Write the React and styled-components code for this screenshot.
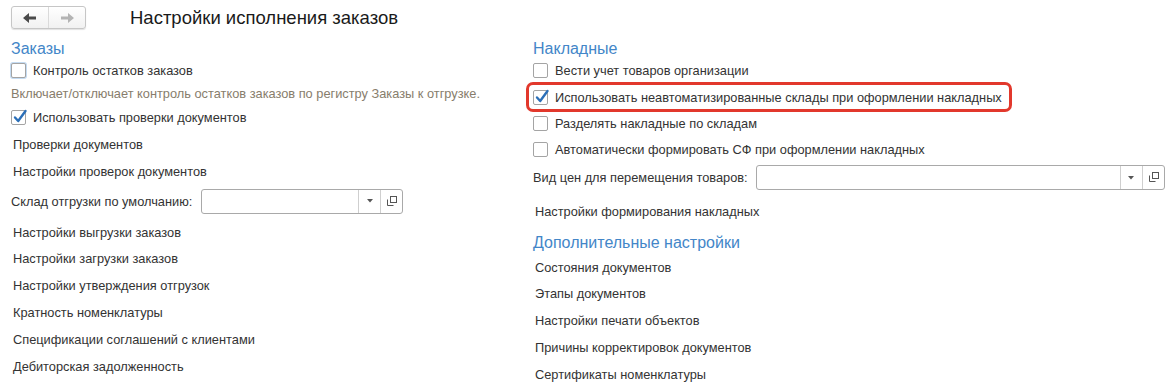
import React from 'react'
import styled, { createGlobalStyle, css } from 'styled-components'

const GlobalStyle = createGlobalStyle`
  body {
    margin: 0;
    background: #fff;
    font-family: 'Liberation Sans', Arial, sans-serif;
    font-size: 12.8px;
    color: #333;
  }
`

const Page = styled.div`
  display: grid;
  grid-template-columns: 522px 1fr;
  padding: 0 5px 0 11px;
  width: 1170px;
  box-sizing: border-box;
`

const TopBar = styled.div`
  grid-column: 1 / -1;
  display: flex;
  align-items: center;
  height: 23px;
  margin: 6px 0 10px;
`

const NavGroup = styled.div`
  display: flex;
  height: 23px;
  box-sizing: border-box;
  border: 1px solid #c6c6c6;
  border-radius: 3px;
  background: linear-gradient(#ffffff, #f1f1f1);
  box-shadow: 0 1px 1px rgba(0, 0, 0, 0.12);
`

const NavButton = styled.div`
  width: 36px;
  display: flex;
  align-items: center;
  justify-content: center;
  & + & {
    border-left: 1px solid #dadada;
  }
`

const Title = styled.div`
  margin-left: 44px;
  font-size: 18.5px;
  color: #1a1a1a;
`

const Column = styled.div`
  display: flex;
  flex-direction: column;
`

const GroupTitle = styled.div`
  height: ${(p) => p.$h}px;
  display: flex;
  align-items: center;
  font-size: 16px;
  color: #4386c8;
`

const Row = styled.div`
  position: relative;
  height: ${(p) => p.$h}px;
  display: flex;
  align-items: center;
  white-space: nowrap;
  ${(p) =>
    p.$marked &&
    css`
      &::before {
        content: '';
        position: absolute;
        left: -7px;
        width: 486px;
        top: 1px;
        bottom: 1px;
        box-sizing: border-box;
        border: 3px solid #e2382c;
        border-radius: 7px;
      }
    `}
`

const Box = styled.span`
  position: relative;
  width: 15px;
  height: 15px;
  box-sizing: border-box;
  border: 1px solid #a4a4a4;
  border-radius: 2px;
  background: #fff;
  margin-right: 7px;
  flex: none;
  ${(p) =>
    p.$focus &&
    css`
      box-shadow: 0 0 0 1px #c4dbf2;
    `}
  svg {
    position: absolute;
    left: 1px;
    top: -2px;
    overflow: visible;
  }
`

const Hint = styled(Row)`
  color: #877d6c;
`

const LinkRow = styled(Row)`
  padding-left: 2px;
  color: #333;
`

const Label = styled.span`
  margin-right: ${(p) => p.$gap}px;
`

const Input = styled.div`
  display: flex;
  width: ${(p) => p.$w}px;
  height: 25px;
  box-sizing: border-box;
  border: 1px solid #a9a9a9;
  border-radius: 3px;
  background: #fff;
`

const InputText = styled.div`
  flex: 1;
`

const InputButton = styled.div`
  width: 21px;
  display: flex;
  align-items: center;
  justify-content: center;
  border-left: 1px solid #cfcfcf;
`

const ArrowLeft = ({ color }) => (
  <svg width="14" height="10" viewBox="0 0 14 10">
    <path d="M0 5 L6 0 V3.5 H13 V6.5 H6 V10 Z" fill={color} />
  </svg>
)

const ArrowRight = ({ color }) => (
  <svg width="14" height="10" viewBox="0 0 14 10">
    <path d="M14 5 L8 0 V3.5 H1 V6.5 H8 V10 Z" fill={color} />
  </svg>
)

const CheckMark = () => (
  <svg width="14" height="14" viewBox="0 0 14 14">
    <path
      d="M2 8.5 L5.2 12 L12.5 2"
      fill="none"
      stroke="#2b6fb8"
      strokeWidth="2.4"
      strokeLinecap="round"
      strokeLinejoin="round"
    />
  </svg>
)

const Check = ({ checked, focus, h = 26, marked, children }) => (
  <Row $h={h} $marked={marked}>
    <Box $focus={focus}>{checked && <CheckMark />}</Box>
    {children}
  </Row>
)

const Field = ({ label, width, h, gap = 7 }) => (
  <Row $h={h}>
    <Label $gap={gap}>{label}</Label>
    <Input $w={width}>
      <InputText />
      <InputButton>
        <svg width="6" height="4" viewBox="0 0 6 4">
          <path d="M0 0 H6 L3 3.5 Z" fill="#555" />
        </svg>
      </InputButton>
      <InputButton>
        <svg width="11" height="11" viewBox="0 0 11 11">
          <rect x="4.5" y="0.5" width="6" height="6" fill="none" stroke="#555" />
          <path d="M1.5 3.5 V9.5 H7.5" fill="none" stroke="#555" />
        </svg>
      </InputButton>
    </Input>
  </Row>
)

const leftLinks = [
  'Настройки загрузки заказов',
  'Настройки утверждения отгрузок',
  'Кратность номенклатуры',
  'Спецификации соглашений с клиентами',
  'Дебиторская задолженность',
]

const rightLinks = [
  'Состояния документов',
  'Этапы документов',
  'Настройки печати объектов',
  'Причины корректировок документов',
  'Сертификаты номенклатуры',
]

export default function App() {
  return (
    <>
      <GlobalStyle />
      <Page>
        <TopBar>
          <NavGroup>
            <NavButton>
              <ArrowLeft color="#4a4a4a" />
            </NavButton>
            <NavButton>
              <ArrowRight color="#b4b4b4" />
            </NavButton>
          </NavGroup>
          <Title>Настройки исполнения заказов</Title>
        </TopBar>

        <Column>
          <GroupTitle $h={20}>Заказы</GroupTitle>
          <Check h={22} focus>
            Контроль остатков заказов
          </Check>
          <Hint $h={24}>
            Включает/отключает контроль остатков заказов по регистру Заказы к отгрузке.
          </Hint>
          <Check h={24} checked>
            Использовать проверки документов
          </Check>
          <LinkRow $h={30}>Проверки документов</LinkRow>
          <LinkRow $h={24}>Настройки проверок документов</LinkRow>
          <Field label="Склад отгрузки по умолчанию:" width={202} h={36} gap={9} />
          <LinkRow $h={26}>Настройки выгрузки заказов</LinkRow>
          {leftLinks.map((t) => (
            <LinkRow key={t} $h={27}>
              {t}
            </LinkRow>
          ))}
        </Column>

        <Column>
          <GroupTitle $h={20}>Накладные</GroupTitle>
          <Check h={22}>Вести учет товаров организации</Check>
          <Check h={32} checked marked>
            Использовать неавтоматизированные склады при оформлении накладных
          </Check>
          <Check h={20}>Разделять накладные по складам</Check>
          <Check h={32}>Автоматически формировать СФ при оформлении накладных</Check>
          <Field label="Вид цен для перемещения товаров:" width={409} h={25} gap={8} />
          <LinkRow $h={42}>Настройки формирования накладных</LinkRow>
          <GroupTitle $h={22}>Дополнительные настройки</GroupTitle>
          {rightLinks.map((t, i) => (
            <LinkRow key={t} $h={i === 0 ? 26 : 27}>
              {t}
            </LinkRow>
          ))}
        </Column>
      </Page>
    </>
  )
}
